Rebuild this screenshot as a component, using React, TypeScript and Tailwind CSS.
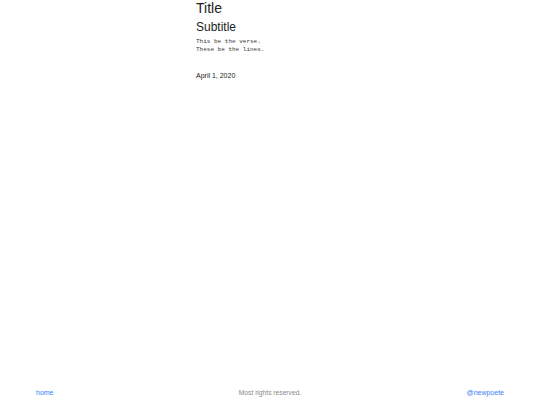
export default function App() {
  return (
    <div className="min-h-screen flex flex-col bg-white font-['Liberation_Sans',Arial,sans-serif]">
      <main className="flex-1 w-[148px] mx-auto">
        <h1 className="text-[14px] leading-[16px] text-[#222]">Title</h1>
        <h2 className="mt-[4px] text-[12px] leading-[14px] text-[#222]">Subtitle</h2>
        <pre className="mt-[4px] font-['Liberation_Mono',monospace] text-[6px] leading-[8px] text-[#333]">
          {"This be the verse.\nThese be the lines."}
        </pre>
        <p className="mt-[17px] text-[7px] leading-[9px] text-[#222]">April 1, 2020</p>
      </main>
      <footer className="grid grid-cols-3 items-center px-9 h-[22px] pb-[2px] text-[7px]">
        <a href="#" className="justify-self-start text-[#3b82f6]">home</a>
        <span className="justify-self-center text-[6.7px] text-[#888]">Most rights reserved.</span>
        <a href="#" className="justify-self-end text-[#3b82f6]">@newpoete</a>
      </footer>
    </div>
  );
}
